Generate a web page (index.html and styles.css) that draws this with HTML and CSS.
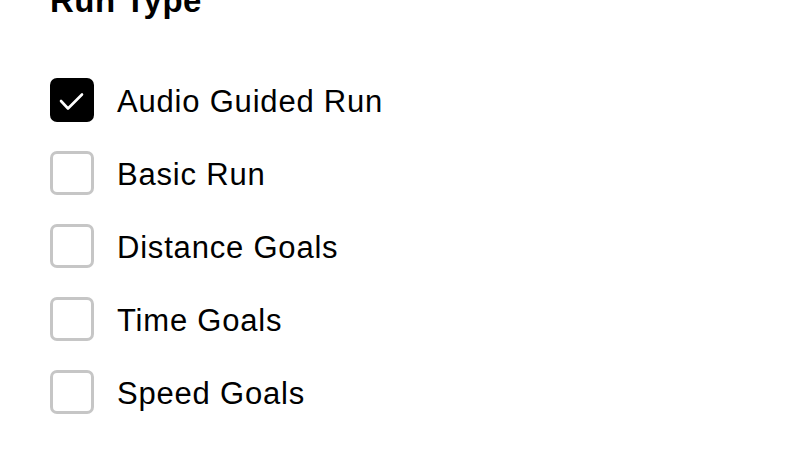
FILE: index.html
```html
<!DOCTYPE html>
<html lang="en">
<head>
  <meta charset="UTF-8">
  <title>Run Type</title>
  <link rel="stylesheet" href="styles.css">
</head>
<body>
  <div class="panel">
    <h2 class="panel-title">Run Type</h2>
    <ul class="option-list">
      <li class="option">
        <span class="box checked">
          <svg viewBox="0 0 44 44" width="44" height="44"><path d="M11 23 L18 30.5 L32 16.5" fill="none" stroke="#fff" stroke-width="2.6" stroke-linecap="round" stroke-linejoin="round"/></svg>
        </span>
        <span class="label">Audio Guided Run</span>
      </li>
      <li class="option"><span class="box"></span><span class="label">Basic Run</span></li>
      <li class="option"><span class="box"></span><span class="label">Distance Goals</span></li>
      <li class="option"><span class="box"></span><span class="label">Time Goals</span></li>
      <li class="option"><span class="box"></span><span class="label">Speed Goals</span></li>
    </ul>
  </div>
</body>
</html>
```

FILE: styles.css
```css
body {
  margin: 0;
  background: #fff;
  color: #000;
  font-family: "Liberation Sans", Arial, sans-serif;
}
.panel {
  padding-left: 50px;
}
.panel-title {
  margin: -16px 0 0 0;
  font-size: 33px;
  line-height: 33px;
  letter-spacing: 0.5px;
  font-weight: bold;
}
.option-list {
  list-style: none;
  margin: 61px 0 0 0;
  padding: 0;
  display: flex;
  flex-direction: column;
  gap: 29px;
}
.option {
  display: flex;
  align-items: center;
  height: 44px;
  gap: 23px;
}
.box {
  box-sizing: border-box;
  width: 44px;
  height: 44px;
  border: 3px solid #c6c6c6;
  border-radius: 7px;
  flex-shrink: 0;
}
.box.checked {
  border: none;
  background: #000;
}
.box svg {
  display: block;
}
.label {
  font-size: 31px;
  line-height: 44px;
  letter-spacing: 0.8px;
  padding-top: 3px;
}
```
